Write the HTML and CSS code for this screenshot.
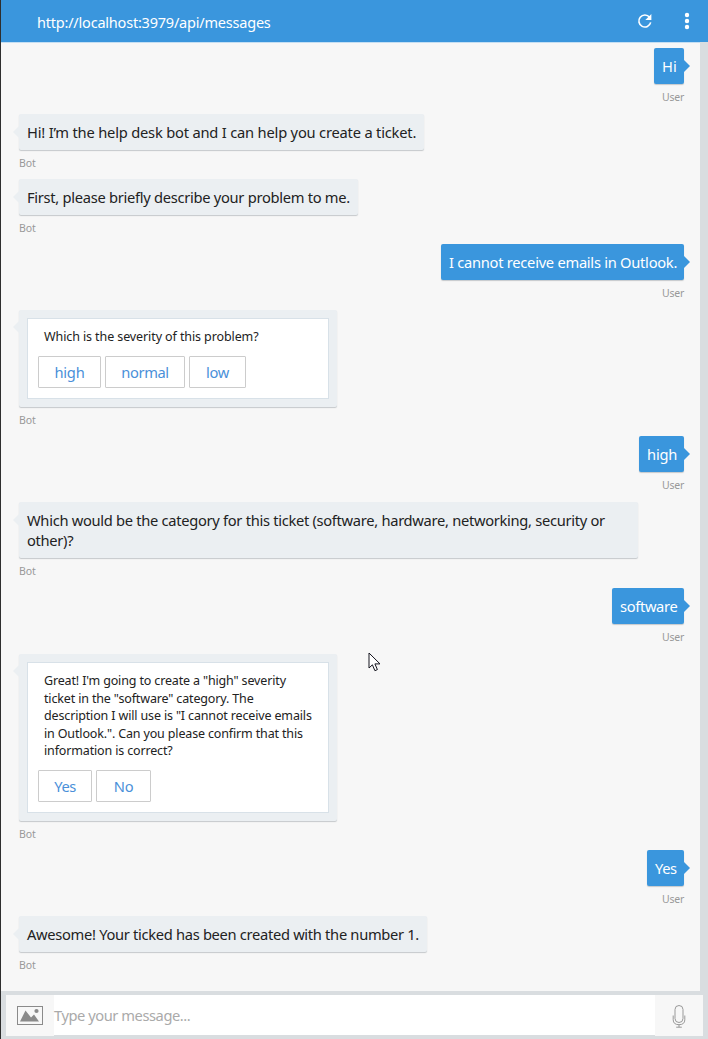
FILE: index.html
```html
<!DOCTYPE html>
<html lang="en">
<head>
<meta charset="utf-8">
<title>Bot emulator</title>
<link rel="stylesheet" href="styles.css">
</head>
<body>
<div class="app">
  <header class="topbar">
    <span class="url">http://localhost:3979/api/messages</span>
    <svg class="refresh" width="16" height="16" viewBox="0 0 16 16"><path d="M12.6 4.3A6 6 0 1 0 13.7 9.4" fill="none" stroke="#fff" stroke-width="1.6"/><path d="M14.4 1v6.1H8.3z" fill="#fff"/></svg>
    <svg class="more" width="6" height="18" viewBox="0 0 6 18" fill="#fff"><circle cx="3" cy="3" r="2.2"/><circle cx="3" cy="9" r="2.2"/><circle cx="3" cy="15" r="2.2"/></svg>
  </header>
  <main class="chat">
    <div class="msg user"><div class="bubble w-hi"><span>Hi</span></div><small>User</small></div>
    <div class="msg bot"><div class="bubble w-intro"><span>Hi! I’m the help desk bot and I can help you create a ticket.</span></div><small>Bot</small></div>
    <div class="msg bot"><div class="bubble w-first"><span>First, please briefly describe your problem to me.</span></div><small>Bot</small></div>
    <div class="msg user"><div class="bubble w-outlook"><span>I cannot receive emails in Outlook.</span></div><small>User</small></div>
    <div class="msg bot"><div class="bubble card-bubble severity">
      <div class="card"><p>Which is the severity of this problem?</p>
        <div class="actions"><button class="b-high">high</button><button class="b-normal">normal</button><button class="b-low">low</button></div></div>
    </div><small>Bot</small></div>
    <div class="msg user"><div class="bubble w-high"><span>high</span></div><small>User</small></div>
    <div class="msg bot"><div class="bubble w-category"><span>Which would be the category for this ticket (software, hardware, networking, security or<br>other)?</span></div><small>Bot</small></div>
    <div class="msg user"><div class="bubble w-software"><span>software</span></div><small>User</small></div>
    <div class="msg bot"><div class="bubble card-bubble confirm">
      <div class="card"><p>Great! I'm going to create a "high" severity<br>ticket in the "software" category. The<br>description I will use is "I cannot receive emails<br>in Outlook.". Can you please confirm that this<br>information is correct?</p>
        <div class="actions"><button class="b-yes">Yes</button><button class="b-no">No</button></div></div>
    </div><small>Bot</small></div>
    <div class="msg user"><div class="bubble w-yes"><span>Yes</span></div><small>User</small></div>
    <div class="msg bot"><div class="bubble w-awesome"><span>Awesome! Your ticked has been created with the number 1.</span></div><small>Bot</small></div>
  </main>
  <footer class="composer">
    <div class="tool"><svg width="26" height="19" viewBox="0 0 26 19"><rect x=".5" y=".5" width="25" height="18" fill="none" stroke="#8a8a8a"/><path d="M3 15.5 8.5 4.5l5.5 7 3-3 5 7z" fill="#8a8a8a"/><circle cx="19.5" cy="5" r="2.1" fill="#8a8a8a"/></svg></div>
    <div class="input">Type your message...</div>
    <div class="tool"><svg width="14" height="24" viewBox="0 0 14 24" fill="none" stroke="#999"><rect x="3" y="1.5" width="8" height="17" rx="4"/><path d="M1.2 11.5v4.2q0 5 5.8 5t5.8-5v-4.2M7 20.7v2.5M4.2 23.2h5.6"/></svg></div>
  </footer>
  <svg class="cursor" width="13" height="21" viewBox="0 0 13 21"><path d="M1 1v15l3.4-3.2 2.5 5.9 2.5-1.1-2.5-5.7H12z" fill="#fff" stroke="#15151f"/></svg>
</div>
</body>
</html>
```
FILE: styles.css
```css
* { box-sizing: border-box; }
body { margin: 0; font: 14.7px/20px "Noto Sans", "Open Sans", sans-serif; color: #222; }
.app { position: relative; width: 708px; height: 1039px; overflow: hidden; display: flex; flex-direction: column; background: #d9dde0; border-left: 1px solid #2e2e2e; }
.topbar { height: 42px; flex: none; display: flex; align-items: center; padding: 0 18px 1px 36px; background: #3a96dd; color: #fff; }
.url { flex: 1; font-size: 14.5px; letter-spacing: -.21px; padding-top: 2px; }
.refresh { margin-right: 31px; }
.chat { width: 699px; height: 949px; flex: none; display: grid; grid-template-rows: 66px 65px 65px 66px 126px 66px 86px 66px 196px 66px 66px; padding: 5px 16px 0 18px; background: #f7f7f7; border-top: 1px solid #c5dff3; }
.msg { display: flex; flex-direction: column; align-items: flex-start; }
.user { align-items: flex-end; }
.bubble { position: relative; min-height: 36px; padding: 8px; border-radius: 2px; background: #ebeff2; box-shadow: 0 1px 1px #c5c8cb; white-space: nowrap; }
.bubble::before { content: ""; position: absolute; top: 12px; left: -6px; border: 6px solid transparent; border-left: 0; border-right-color: #ebeff2; }
.user .bubble { background: #3a96dd; color: #fff; }
.user .bubble::before { left: auto; right: -6px; border: 6px solid transparent; border-right: 0; border-left-color: #3a96dd; }
small { font-size: 10.5px; line-height: 16px; margin-top: 5px; color: #999; letter-spacing: -.1px; }
.user small { letter-spacing: -.25px; }
.w-hi { width: 30px; }
.w-intro { width: 405px; letter-spacing: -.2px; }
.w-first { width: 339px; letter-spacing: -.29px; }
.w-outlook { width: 243px; letter-spacing: -.27px; }
.w-high { width: 45px; letter-spacing: -.2px; }
.w-category { width: 619px; height: 56px; letter-spacing: -.3px; }
.w-software { width: 72px; letter-spacing: -.35px; }
.w-yes { width: 37px; letter-spacing: -.4px; }
.w-awesome { width: 408px; letter-spacing: -.31px; }
.card-bubble { width: 318px; }
.severity { height: 97px; }
.confirm { height: 167px; }
.severity::before, .confirm::before { top: 11px; }
.card { height: 100%; background: #fff; border: 1px solid #d8e1e8; padding: 9px 10px; }
.card p { margin: 0 0 10px; padding-left: 6px; font-size: 12.5px; line-height: 17.6px; letter-spacing: -.1px; }
.confirm p { letter-spacing: -.15px; }
.actions { display: flex; gap: 4px; }
button { height: 32px; padding: 0; background: #fff; border: 1px solid #ccc; color: #4a90d9; font: inherit; letter-spacing: -.25px; border-radius: 1px; }
.b-high { width: 63px; }
.b-normal { width: 80px; letter-spacing: -.4px; }
.b-low { width: 57px; }
.b-yes { width: 54px; letter-spacing: -.5px; }
.b-no { width: 55px; }
.composer { height: 40px; margin: 4px 5px 4px 5px; display: grid; grid-template-columns: 48px 1fr 48px; background: #fff; }
.tool { display: flex; align-items: center; justify-content: center; background: #f7f7f7; }
.input { color: #aaa; line-height: 41px; letter-spacing: -.45px; }
.cursor { position: absolute; left: 367px; top: 652px; }
```
